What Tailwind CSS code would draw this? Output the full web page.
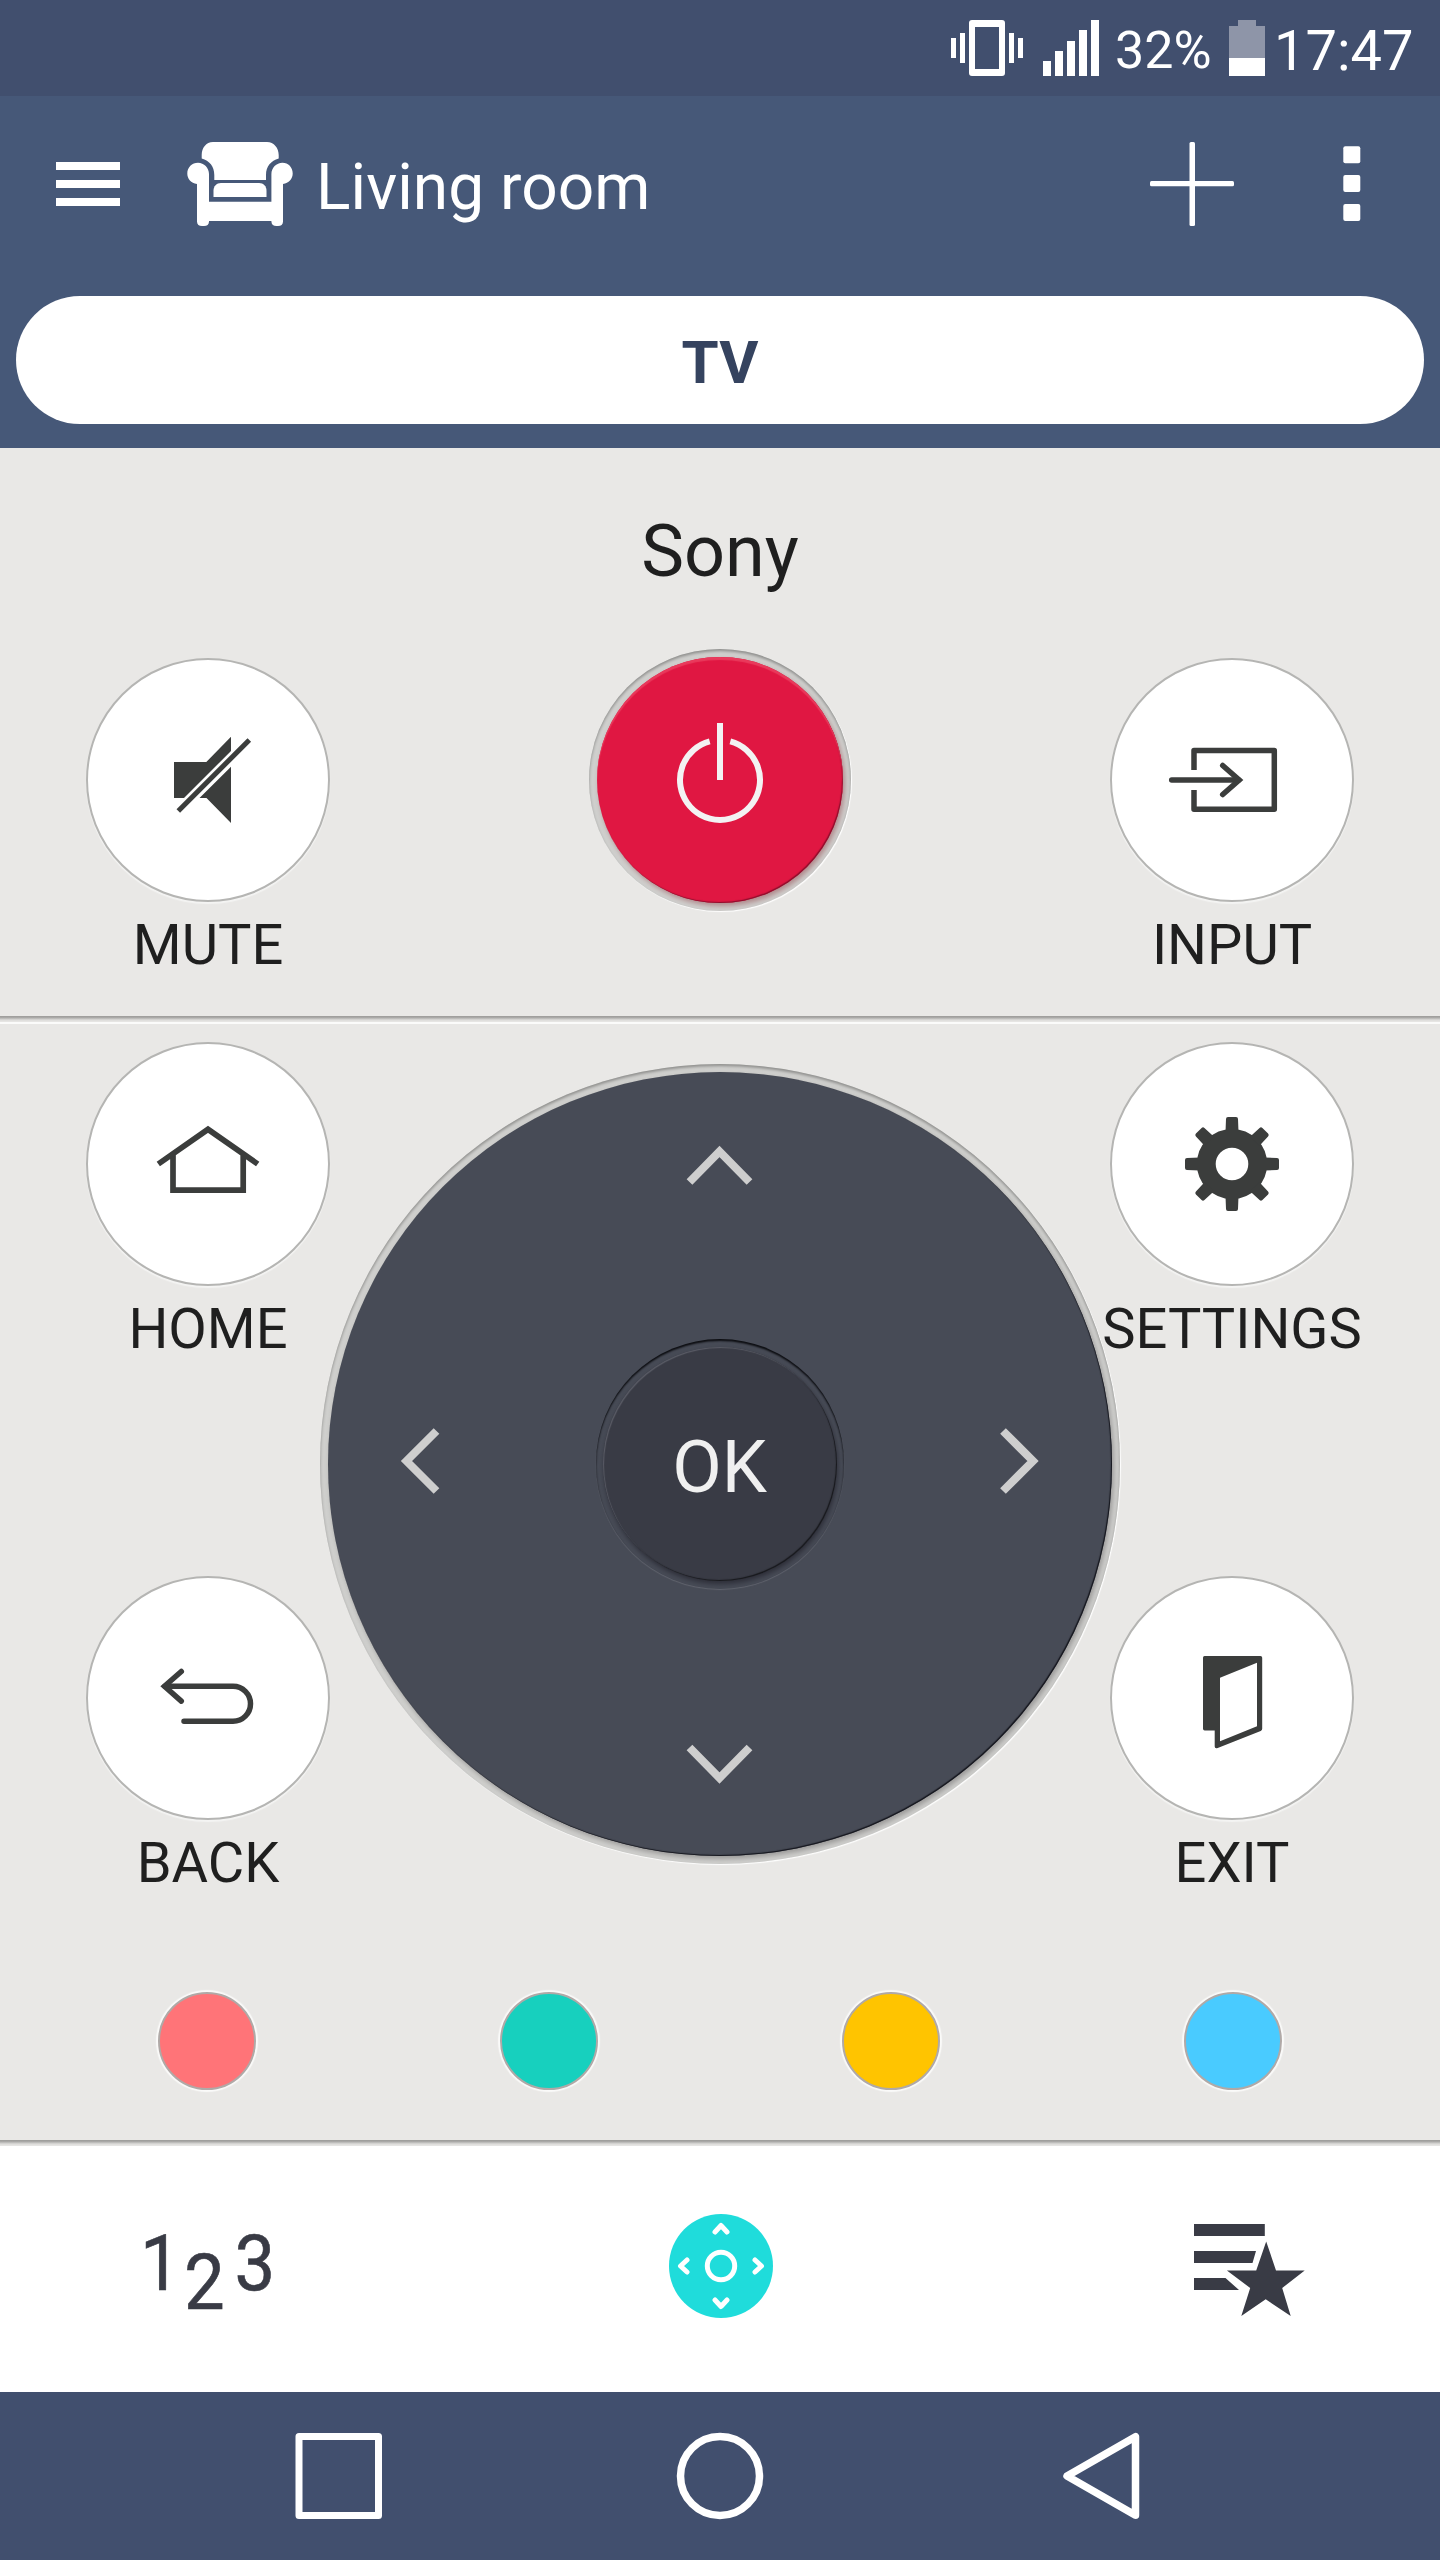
<!DOCTYPE html>
<html lang="en">
<head>
  <meta charset="UTF-8" />
  <meta name="viewport" content="width=device-width, initial-scale=1.0"/>
  <title>Remote - Living room</title>
  <script src="https://cdn.jsdelivr.net/npm/@tailwindcss/browser@4"></script>
</head>
<body class="w-[1440px] h-[2560px] overflow-hidden bg-[#e9e8e6] text-[#1f1f1f] font-['Roboto',sans-serif]">

  <!-- Status bar -->
  <div class="h-24 bg-[#414f6e] text-white flex items-center justify-end pr-7">
    <svg class="w-[72px] h-14" viewBox="0 0 72 56" fill="#fff">
      <rect x="0" y="18" width="5" height="20"/>
      <rect x="9" y="13" width="5" height="30"/>
      <path fill-rule="evenodd" d="M21 0h30a3 3 0 0 1 3 3v50a3 3 0 0 1-3 3H21a3 3 0 0 1-3-3V3a3 3 0 0 1 3-3zM24 7v42h24V7z"/>
      <rect x="58" y="13" width="5" height="30"/>
      <rect x="67" y="18" width="5" height="20"/>
    </svg>
    <svg class="w-14 h-14 ml-5" viewBox="0 0 56 56" fill="#fff">
      <rect x="0" y="41" width="8" height="15"/>
      <rect x="12" y="31" width="8" height="25"/>
      <rect x="24" y="21" width="8" height="35"/>
      <rect x="36" y="10" width="8" height="46"/>
      <rect x="48" y="0" width="8" height="56"/>
    </svg>
    <span class="w-[97px] ml-4 pt-[5px] text-[52px] leading-[61px]">32%</span>
    <svg class="w-9 h-14 ml-[17px]" viewBox="0 0 36 56">
      <path fill="#8e95a8" d="M9 0h18v6h9v32H0V6h9z"/>
      <rect y="38" width="36" height="18" fill="#fff"/>
    </svg>
    <span class="w-[138px] ml-[9px] pt-[6px] text-[56px] leading-[66px]">17:47</span>
  </div>

  <!-- Header -->
  <header class="h-[352px] bg-[#465878] px-4">
    <div class="h-[176px] flex items-center text-white">
      <svg class="w-16 h-11 ml-10" viewBox="0 0 64 44" fill="#fff">
        <rect width="64" height="8"/>
        <rect y="18" width="64" height="8"/>
        <rect y="36" width="64" height="8"/>
      </svg>
      <svg class="w-[106px] h-[84px] ml-[67px]" viewBox="0 0 106 84" fill="#fff">
        <path d="M26 0h54c7 0 11.700 6 11.700 13v3.500C84 19 79 24 79 33v5H27.300v-5C27.300 24 22.500 19 14.700 16.500V13C14.700 6 19 0 26 0z"/>
        <path d="M10 42C4 41 .3 37 .3 31.500 .3 25.500 5 20.800 11 20.800S22 26 22 32v27.700h62.400V32c0-6 5-11.200 11-11.200s10.300 4.700 10.300 10.700c0 5.500-4 9.500-9.700 10.500v37.500c0 3-2 4.500-5 4.500h-1.500c-3 0-5.100-1.500-5.100-4.500V79H22v.5c0 3-2 4.500-5 4.500h-2c-3 0-5-1.500-5-4.500z"/>
        <path d="M34 41h38c4.500 0 7.500 3.500 7.500 7.500V55h-53v-6.500c0-4 3-7.500 7.500-7.500z"/>
      </svg>
      <h1 class="ml-[23px] pt-[6px] text-[64px] leading-[75px] tracking-[0.05px] whitespace-nowrap">Living room</h1>
      <svg class="w-[84px] h-[84px] ml-auto" viewBox="0 0 84 84">
        <rect x="39.500" width="5.500" height="84" rx="1.500" fill="#fff"/>
        <rect y="39" width="84" height="5.300" rx="1.500" fill="#fff"/>
      </svg>
      <svg class="w-[18px] h-[76px] ml-[109px] mr-[63px]" viewBox="0 0 18 76" fill="#fff">
        <rect x=".3" y=".2" width="17" height="17" rx="2"/>
        <rect x=".3" y="29" width="17" height="17" rx="2"/>
        <rect x=".3" y="58" width="17" height="17" rx="2"/>
      </svg>
    </div>
    <div class="mt-6 h-32 rounded-full bg-white flex items-center justify-center pt-[5px] text-[60px] font-bold text-[#35435f]">TV</div>
  </header>

  <!-- Power row -->
  <section class="h-[568px] pt-14">
    <h2 class="text-center text-[72px] leading-[96px]">Sony</h2>
    <div class="mt-[49px] px-[86px] flex justify-between items-start">
      <div class="w-[244px] pt-[9px] flex flex-col items-center">
        <div class="w-[244px] h-[244px] rounded-full bg-white border-2 border-[#b5b5b3] shadow-[0_2px_1px_#f4f4f3]">
          <svg class="w-60 h-60" viewBox="88 660 240 240" fill="#3b3d3c">
            <path d="M174 762h32.300L231 736.700V751l-47 47h-10zM231 766.700V823l-24.500-25h-7z"/>
            <path d="M178.300 811l71-71" stroke="#3b3d3c" stroke-width="5"/>
          </svg>
        </div>
        <span class="mt-[10px] text-[56px] leading-[66px]">MUTE</span>
      </div>

      <div class="w-[262px] h-[262px] p-2 rounded-full bg-[#cfcfcd] shadow-[inset_0_2px_3px_#8f8f8d,1px_1px_1px_#fff]">
        <div class="w-[246px] h-[246px] rounded-full bg-[#e01742] shadow-[inset_0_3px_1px_#e93a5c,inset_-1px_-1px_1px_#8a0f2c,2px_3px_5px_#b08a8c]">
          <svg class="w-[246px] h-[246px]" viewBox="597 657 246 246" fill="none" stroke="#f3f2f3" stroke-width="6">
            <path d="M720 723v57M709.700 741.300a40 40 0 1 0 20.600 0"/>
          </svg>
        </div>
      </div>

      <div class="w-[244px] pt-[9px] flex flex-col items-center">
        <div class="w-[244px] h-[244px] rounded-full bg-white border-2 border-[#b5b5b3] shadow-[0_2px_1px_#f4f4f3]">
          <svg class="w-60 h-60" viewBox="1112 660 240 240" fill="none" stroke="#3b3d3c" stroke-width="5.500" stroke-linejoin="round">
            <path d="M1194 770v-19.500h80.300v58.800H1194V790"/>
            <path stroke-linecap="round" d="M1171.700 780h67"/>
            <path stroke-linecap="round" stroke-linejoin="miter" d="M1222.700 765.500l16.500 14.500-16.500 14.500"/>
          </svg>
        </div>
        <span class="mt-[10px] text-[56px] leading-[66px]">INPUT</span>
      </div>
    </div>
  </section>

  <div class="h-2 bg-[linear-gradient(#a09f9d_0_1px,#b3b2b0_2px,#dddcda_4px,#e9e8e6_6px,#fbfbfa_6px)]"></div>

  <!-- Direction pad with side buttons -->
  <section class="h-[872px] px-[86px] flex justify-between">
    <div class="w-[244px] pt-[18px] flex flex-col justify-between">
      <div class="flex flex-col items-center">
        <div class="w-[244px] h-[244px] rounded-full bg-white border-2 border-[#b5b5b3] shadow-[0_2px_1px_#f4f4f3]">
          <svg class="w-60 h-60" viewBox="88 1044 240 240" fill="none" stroke="#3b3d3c" stroke-width="5.700">
            <path d="M158.300 1164l49.700-34.700 49.700 34.700M173 1154v36.200h70.200V1154"/>
          </svg>
        </div>
        <span class="mt-[10px] text-[56px] leading-[66px]">HOME</span>
      </div>
      <div class="flex flex-col items-center">
        <div class="w-[244px] h-[244px] rounded-full bg-white border-2 border-[#b5b5b3] shadow-[0_2px_1px_#f4f4f3]">
          <svg class="w-60 h-60" viewBox="88 1578 240 240" fill="none" stroke="#3b3d3c" stroke-width="5.500" stroke-linecap="round">
            <path d="M181.300 1671.500l-16.800 14.800 16.800 14.800"/>
            <path d="M165 1686.300h68a17.500 17.500 0 0 1 0 35h-49"/>
          </svg>
        </div>
        <span class="mt-[10px] text-[56px] leading-[66px]">BACK</span>
      </div>
    </div>

    <div class="relative shrink-0 w-[800px] h-[800px] -mx-[10px] mt-10 p-2 rounded-full bg-[#cfcfcd] shadow-[inset_0_2px_3px_#8f8f8d,1px_1px_1px_#fff]">
      <div class="w-[784px] h-[784px] flex items-center justify-center rounded-full bg-[#474b56] shadow-[inset_-1px_-1px_1px_#14151c,2px_3px_5px_#9b9a99]">
        <div class="w-[248px] h-[250px] flex items-center justify-center rounded-full shadow-[inset_0_2px_2px_#0b0c10,0_1px_1px_#62656f]">
          <div class="w-[234px] h-[234px] pt-[7px] flex items-center justify-center rounded-full bg-[#393b45] text-[72px] text-[#f0f0f0] shadow-[inset_1px_1px_1px_#5a5c66,inset_-1px_-1px_1px_#17181c,1px_3px_5px_#2d2e38]"><span class="-ml-px">OK</span></div>
        </div>
      </div>
      <svg class="absolute inset-0 w-[800px] h-[800px]" viewBox="320 1064 800 800" fill="none" stroke="#cecece" stroke-width="8">
        <path d="M689.500 1182l30-30.500 30 30.500M689.500 1747.500l30 30.500 30-30.500M436.500 1431l-30 30 30 30M1003 1431l30 30-30 30"/>
      </svg>
    </div>

    <div class="w-[244px] pt-[18px] flex flex-col justify-between">
      <div class="flex flex-col items-center">
        <div class="w-[244px] h-[244px] rounded-full bg-white border-2 border-[#b5b5b3] shadow-[0_2px_1px_#f4f4f3]">
          <svg class="w-60 h-60" viewBox="-120 -120 240 240" fill="#3b3d3c">
            <defs>
              <path id="tooth" d="M-6.500-32L-6-45q0-2 2-2h8q2 0 2 2l.5 13z"/>
            </defs>
            <circle r="25.700" fill="none" stroke="#3b3d3c" stroke-width="18.800"/>
            <use href="#tooth"/>
            <use href="#tooth" transform="rotate(45)"/>
            <use href="#tooth" transform="rotate(90)"/>
            <use href="#tooth" transform="rotate(135)"/>
            <use href="#tooth" transform="rotate(180)"/>
            <use href="#tooth" transform="rotate(225)"/>
            <use href="#tooth" transform="rotate(270)"/>
            <use href="#tooth" transform="rotate(315)"/>
          </svg>
        </div>
        <span class="mt-[10px] text-[56px] leading-[66px]">SETTINGS</span>
      </div>
      <div class="flex flex-col items-center">
        <div class="w-[244px] h-[244px] rounded-full bg-white border-2 border-[#b5b5b3] shadow-[0_2px_1px_#f4f4f3]">
          <svg class="w-60 h-60" viewBox="1112 1578 240 240" fill="#3b3d3c">
            <path fill-rule="evenodd" d="M1204.500 1656h56q1.700 0 1.700 1.700v71q0 1.500-1.500 2.300l-43 17q-3 1-3-1.500v-16h-10q-1.700 0-1.700-1.700v-71q0-1.800 1.500-1.800zM1220 1677.700v63.600l37-15v-63.600z"/>
          </svg>
        </div>
        <span class="mt-[10px] text-[56px] leading-[66px]">EXIT</span>
      </div>
    </div>
  </section>

  <!-- Colour keys -->
  <section class="h-[244px] pt-24 px-[158px] flex justify-between">
    <div class="w-[98px] h-[98px] rounded-full bg-[#ff7478] border-2 border-[#b0a9a7] shadow-[0_0_1px_2px_#fafaf9]"></div>
    <div class="w-[98px] h-[98px] rounded-full bg-[#17d0be] border-2 border-[#b0a9a7] shadow-[0_0_1px_2px_#fafaf9]"></div>
    <div class="w-[98px] h-[98px] rounded-full bg-[#ffc400] border-2 border-[#b0a9a7] shadow-[0_0_1px_2px_#fafaf9]"></div>
    <div class="w-[98px] h-[98px] rounded-full bg-[#49cbff] border-2 border-[#b0a9a7] shadow-[0_0_1px_2px_#fafaf9]"></div>
  </section>

  <div class="h-[6px] bg-[linear-gradient(#a09f9d_0_1px,#b3b2b0_2px,#dddcda_4px,#e9e8e6_6px)]"></div>

  <!-- Tabs -->
  <nav class="h-[246px] bg-white flex items-start pt-[68px] pl-[130px]">
    <svg class="w-[156px] h-[124px]" viewBox="-10 0 156 124" fill="#393b45" stroke="#393b45" stroke-width=".6" font-family="Roboto, sans-serif" font-size="78">
      <text transform="translate(0 76) scale(.93 1)">1</text>
      <text transform="translate(44 95) scale(.93 1)">2</text>
      <text transform="translate(94.500 76) scale(.93 1)">3</text>
    </svg>
    <svg class="w-[104px] h-[104px] ml-[383px]" viewBox="-52 -52 104 104" fill="none" stroke="#fff" stroke-width="5" stroke-linecap="round" stroke-linejoin="round">
      <circle r="52" fill="#1fdcdb" stroke="none"/>
      <circle r="13.700"/>
      <path d="M-6-34l6-6.500 6 6.500M-6 34l6 6.500 6-6.500M-34-6l-6.500 6 6.500 6M34-6l6.500 6-6.500 6"/>
    </svg>
    <svg class="w-28 h-[104px] ml-[421px]" viewBox="1194 2214 112 104" fill="#393b45">
      <path d="M1194 2224h70.800v12H1194zM1194 2251h62l-3.500 12H1194zM1194 2278h31.500l13.500 12h-45z"/>
      <path d="M1266.200 2241.500l9.800 28.900h28.700l-22.500 17.600 8.500 28-25-16.700-24.400 16.700 8.900-28-23.300-17.600h29.300z"/>
    </svg>
  </nav>

  <!-- System navigation -->
  <div class="h-[168px] bg-[#414f6e] px-[294px] flex items-center justify-between">
    <svg class="w-[88px] h-[88px]" viewBox="0 0 88 88" fill="none" stroke="#fff" stroke-width="7" stroke-linejoin="round">
      <rect x="5" y="4.500" width="79.500" height="79"/>
    </svg>
    <svg class="w-[88px] h-[88px]" viewBox="0 0 88 88" fill="none" stroke="#fff" stroke-width="7.500">
      <circle cx="44" cy="44" r="39.500"/>
    </svg>
    <svg class="w-[88px] h-[88px]" viewBox="0 0 88 88" fill="none" stroke="#fff" stroke-width="7.500" stroke-linejoin="round">
      <path d="M77.500 4.700v78.600L9 44z"/>
    </svg>
  </div>

</body>
</html>
